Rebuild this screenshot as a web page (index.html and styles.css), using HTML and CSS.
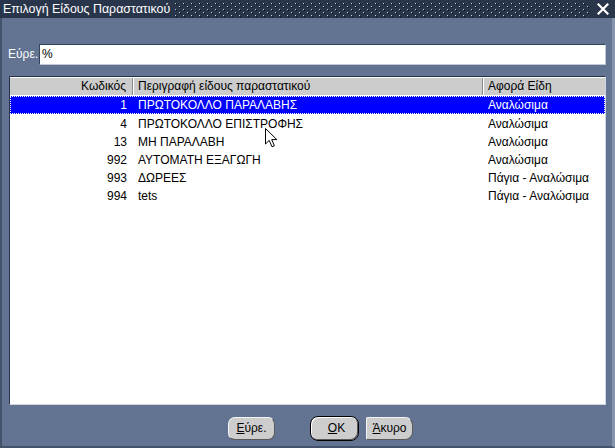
FILE: index.html
```html
<!DOCTYPE html>
<html lang="el">
<head>
<meta charset="utf-8">
<title>Επιλογή Είδους Παραστατικού</title>
<link rel="stylesheet" href="styles.css">
</head>
<body>
<div class="window">
  <div class="titlebar">
    <span class="title">Επιλογή Είδους Παραστατικού</span>
    <svg class="dots" width="414" height="14" aria-hidden="true">
      <defs>
        <pattern id="dp" width="8" height="6" patternUnits="userSpaceOnUse">
          <rect x="0" y="0" width="1" height="1" fill="#c4ccd8"/>
          <rect x="1" y="1" width="1" height="1" fill="#0c1119"/>
          <rect x="4" y="3" width="1" height="1" fill="#c4ccd8"/>
          <rect x="5" y="4" width="1" height="1" fill="#0c1119"/>
        </pattern>
      </defs>
      <rect x="0" y="0" width="414" height="14" fill="url(#dp)"/>
    </svg>
    <svg class="close" width="12" height="12" viewBox="0 0 12 12" aria-hidden="true">
      <path d="M1.5 1.5 L10.5 10.5 M10.5 1.5 L1.5 10.5" stroke="#ffffff" stroke-width="2.2" stroke-linecap="square"/>
    </svg>
  </div>
  <div class="content">
    <div class="search">
      <span class="label">Εύρε.</span>
      <div class="input">%</div>
    </div>
    <div class="list">
      <div class="row head">
        <div class="c1">Κωδικός</div>
        <div class="c2">Περιγραφή είδους παραστατικού</div>
        <div class="c3">Αφορά Είδη</div>
      </div>
      <div class="row sel">
        <div class="c1">1</div>
        <div class="c2">ΠΡΩΤΟΚΟΛΛΟ ΠΑΡΑΛΑΒΗΣ</div>
        <div class="c3">Αναλώσιμα</div>
      </div>
      <div class="row">
        <div class="c1">4</div>
        <div class="c2">ΠΡΩΤΟΚΟΛΛΟ ΕΠΙΣΤΡΟΦΗΣ</div>
        <div class="c3">Αναλώσιμα</div>
      </div>
      <div class="row">
        <div class="c1">13</div>
        <div class="c2">ΜΗ ΠΑΡΑΛΑΒΗ</div>
        <div class="c3">Αναλώσιμα</div>
      </div>
      <div class="row">
        <div class="c1">992</div>
        <div class="c2">ΑΥΤΟΜΑΤΗ ΕΞΑΓΩΓΗ</div>
        <div class="c3">Αναλώσιμα</div>
      </div>
      <div class="row">
        <div class="c1">993</div>
        <div class="c2">ΔΩΡΕΕΣ</div>
        <div class="c3">Πάγια - Αναλώσιμα</div>
      </div>
      <div class="row">
        <div class="c1">994</div>
        <div class="c2">tets</div>
        <div class="c3">Πάγια - Αναλώσιμα</div>
      </div>
      <svg class="cursor" width="13" height="20" viewBox="0 0 13 20" aria-hidden="true">
        <path d="M0.5 0.5 L0.5 16 L4.2 12.4 L7 18.8 L9.4 17.8 L6.7 11.6 L11.8 11.6 Z" fill="#ffffff" stroke="#000000" stroke-width="1" stroke-linejoin="miter"/>
      </svg>
    </div>
    <div class="buttons">
      <div class="btn find"><u>Ε</u>ύρε.</div>
      <div class="btn ok"><u>O</u>K</div>
      <div class="btn cancel"><u>Ά</u>κυρο</div>
    </div>
  </div>
</div>
</body>
</html>
```

FILE: styles.css
```css
html, body {
  margin: 0;
  padding: 0;
}

body {
  width: 615px;
  height: 448px;
  overflow: hidden;
  font-family: "Liberation Sans", Arial, sans-serif;
  font-size: 12px;
  color: #000;
}

.window {
  width: 615px;
  height: 448px;
  box-sizing: border-box;
  background: #627491;
  border-left: 2px solid #44536b;
  border-right: 3px solid #8594ab;
  border-bottom: 2px solid #44536b;
  display: flex;
  flex-direction: column;
}

.titlebar {
  height: 18px;
  background: #29354b;
  display: flex;
  align-items: center;
  margin-left: -2px;
  margin-right: -3px;
  padding-left: 3px;
  box-sizing: border-box;
}

.title {
  color: #ffffff;
  font-size: 12.4px;
  line-height: 18px;
  white-space: nowrap;
  width: 172px;
}

.dots {
  display: block;
  margin-top: 1px;
}

.close {
  display: block;
  margin-left: 8px;
}

.content {
  flex: 1;
  display: flex;
  flex-direction: column;
  padding: 26px 6px 0 6px;
}

.search {
  display: flex;
  align-items: center;
  height: 21px;
}

.label {
  color: #ffffff;
  width: 31px;
  line-height: 21px;
}

.input {
  width: 567px;
  height: 21px;
  box-sizing: border-box;
  background: #ffffff;
  border-top: 1px solid #34415a;
  border-left: 1px solid #34415a;
  border-right: 1px solid #c2cad6;
  border-bottom: 1px solid #c2cad6;
  padding-left: 2px;
  line-height: 19px;
}

.list {
  position: relative;
  margin-top: 11px;
  margin-left: 1px;
  width: 597px;
  height: 329px;
  box-sizing: border-box;
  background: #ffffff;
  border-top: 1px solid #28324a;
  border-left: 1px solid #28324a;
  border-right: 1px solid #cfd6e0;
  border-bottom: 1px solid #cfd6e0;
}

.row {
  display: flex;
  height: 18px;
  line-height: 18px;
  white-space: nowrap;
}

.c1 {
  width: 123px;
  box-sizing: border-box;
  text-align: right;
  padding-right: 6px;
}

.c2 {
  width: 350px;
  box-sizing: border-box;
  padding-left: 5px;
}

.c3 {
  flex: 1;
  padding-left: 5px;
}

.head {
  background: #cccccc;
  border-top: 1px solid #ffffff;
  height: 18px;
  box-sizing: border-box;
  line-height: 17px;
}

.head .c1 {
  border-right: 1px solid #8a8a8a;
}

.head .c2 {
  border-right: 1px solid #8a8a8a;
  border-left: 1px solid #ffffff;
  padding-left: 4px;
}

.head .c3 {
  border-left: 1px solid #ffffff;
  padding-left: 4px;
}

.sel {
  background: #0000ff;
  color: #ffffff;
  outline: 1px dotted #ffffff;
  outline-offset: -1px;
  margin-top: 1px;
  margin-bottom: 1px;
}

.cursor {
  position: absolute;
  left: 255px;
  top: 51px;
}

.buttons {
  display: flex;
  align-items: center;
  margin-top: 11px;
  padding-left: 220px;
  height: 25px;
}

.btn {
  height: 23px;
  box-sizing: border-box;
  background: #cdcdcd;
  border-radius: 7px;
  border-top: 1px solid #f4f4f4;
  border-left: 1px solid #f4f4f4;
  border-right: 1px solid #5a5a5a;
  border-bottom: 1px solid #5a5a5a;
  text-align: center;
  line-height: 21px;
}

.find {
  width: 47px;
}

.ok {
  width: 49px;
  height: 25px;
  line-height: 23px;
  margin-left: 35px;
  border: 1px solid #000000;
  border-radius: 8px;
  box-shadow: inset -1px -1px 0 #5a5a5a, inset 1px 1px 0 #ffffff;
  padding-left: 4px;
}

.cancel {
  width: 47px;
  margin-left: 7px;
  border-radius: 2px 8px 8px 2px;
}
```
